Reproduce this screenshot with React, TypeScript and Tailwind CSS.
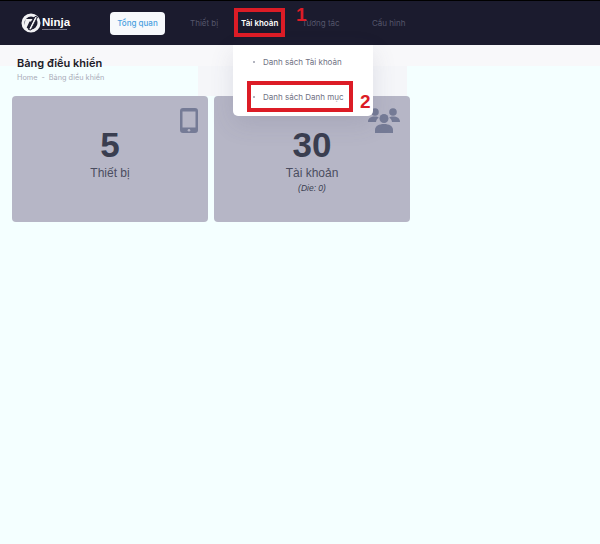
const NAV_ITEMS = [
  { label: "Thiết bị", cls: "w-[51px] text-[#55566b]" },
  { label: "Tài khoản", cls: "w-[61px] font-semibold text-white" },
  { label: "Tương tác", cls: "w-[70px] text-[#55566b]" },
  { label: "Cấu hình", cls: "w-[40px] text-[#55566b]" },
];

const MENU_ITEMS = ["Danh sách Tài khoản", "Danh sách Danh mục"];

function Logo() {
  return (
    <div className="flex items-center">
      <svg width="20" height="20" viewBox="0 0 20 20" className="shrink-0">
        <circle cx="10" cy="10" r="8" fill="none" stroke="#f1f1f4" strokeWidth="3" />
        <path d="M4.500 6h7l-1.500 2.500H8.500L5.500 15h-2.500z" fill="#f1f1f4" />
        <path d="M14 3.500l2.500.5-6.500 13-2.500-.5z" fill="#f1f1f4" stroke="#1b1b2e" strokeWidth="1" />
      </svg>
      <div className="ml-[1px] flex flex-col items-start">
        <span className="font-['Liberation_Sans',sans-serif] text-[11.500px] leading-[12px] font-bold text-white">
          Ninja
        </span>
        <span className="mt-[1px] h-[1px] w-[25px] bg-[#77778a]" />
      </div>
    </div>
  );
}

function PhoneIcon() {
  return (
    <svg width="18" height="25" viewBox="0 0 18 25" fill="#757b96">
      <path
        fillRule="evenodd"
        d="M3 0h12a3 3 0 0 1 3 3v19a3 3 0 0 1-3 3H3a3 3 0 0 1-3-3V3a3 3 0 0 1 3-3zM2.500 3.500v16h13v-16z"
      />
      <circle cx="9" cy="22.200" r="1.300" fill="#b6b6c6" />
    </svg>
  );
}

function UsersIcon() {
  return (
    <svg width="32" height="25" viewBox="0 0 32 25" fill="#757b96">
      <circle cx="7" cy="4" r="3.800" />
      <circle cx="25" cy="4" r="3.800" />
      <path d="M0 14c0-4 3-5.500 7-5.500 2 0 3 .5 3.800 1.200-1.700 1-2.600 2.500-2.800 4.300z" />
      <path d="M32 14c0-4-3-5.500-7-5.500-2 0-3 .5-3.800 1.200 1.700 1 2.600 2.500 2.800 4.300z" />
      <circle cx="16" cy="10.500" r="4.500" />
      <path d="M7 25v-3c0-4 4-6 9-6s9 2 9 6v3z" />
    </svg>
  );
}

function StatCard({
  value,
  label,
  note,
  icon,
}: {
  value: string;
  label: string;
  note?: string;
  icon: JSX.Element;
}) {
  return (
    <div className="relative flex h-[126px] w-[196px] flex-col items-center rounded-[4px] bg-[#b6b6c6] pt-[29px] font-['Liberation_Sans',sans-serif] text-[#3a3e50]">
      <div className="absolute top-[12px] right-[10px] flex justify-end">{icon}</div>
      <span className="text-[35px] leading-[40px] font-bold">{value}</span>
      <span className="mt-[1px] text-[12px] leading-[15px] text-[#4b4d60]">{label}</span>
      {note && <span className="mt-[1px] text-[8.500px] leading-[12px] italic">{note}</span>}
    </div>
  );
}

export default function App() {
  return (
    <div className="relative h-[544px] w-[600px] overflow-hidden bg-[#f4ffff] font-['Inter','Liberation_Sans',sans-serif]">
      <header className="flex h-[45px] items-center border-t border-black bg-[#1b1b2e] pl-[21px] text-[8px]">
        <div className="w-[89px]">
          <Logo />
        </div>
        <button
          type="button"
          className="h-[23px] w-[55px] rounded-[4px] bg-[#f7f9fc] text-[8px] font-medium text-[#4a9fe0]"
        >
          Tổng quan
        </button>
        <nav className="ml-[25px] flex items-center">
          {NAV_ITEMS.map((item) => (
            <span key={item.label} className={item.cls}>
              {item.label}
            </span>
          ))}
        </nav>
      </header>

      <div className="relative h-[51px] px-[17px] pt-[11px]">
        {/* dải nền nhạt sau tiêu đề và quầng mờ của menu */}
        <div className="absolute inset-x-0 top-0 h-[21px] bg-[#f8f8fa]" />
        <div className="absolute top-[21px] left-[198px] h-[30px] w-[209px] bg-[#f5f6f9]" />
        <div className="relative">
          <h1 className="text-[11px] leading-[14px] font-semibold text-[#1b1b28]">Bảng điều khiển</h1>
          <div className="mt-[3px] flex items-center gap-[4px] text-[7.300px] leading-[10px] text-[#a9abb8]">
            <span>Home</span>
            <span>-</span>
            <span>Bảng điều khiển</span>
          </div>
        </div>
      </div>

      <div className="flex gap-[6px] px-[12px]">
        <StatCard value="5" label="Thiết bị" icon={<PhoneIcon />} />
        <StatCard value="30" label="Tài khoản" note="(Die: 0)" icon={<UsersIcon />} />
      </div>

      {/* menu thả xuống và chú thích đỏ nằm đè lên nội dung */}
      <div className="absolute top-[45px] left-[233px] flex h-[71px] w-[140px] flex-col gap-[23px] rounded-b-[5px] bg-white pt-[11px] pl-[20px] text-[8px] leading-[12px] text-[#6f7183] shadow-[0_8px_24px_rgba(80,80,110,0.14)]">
        {MENU_ITEMS.map((label) => (
          <div key={label} className="relative">
            <span className="absolute top-[5px] left-[0px] h-[2px] w-[2px] rounded-full bg-[#9a9cab]" />
            <span className="ml-[10px]">{label}</span>
          </div>
        ))}
      </div>

      <div className="absolute top-[8px] left-[234px] h-[29px] w-[51px] border-[4px] border-[#dc1c26]" />
      <div className="absolute top-[81px] left-[247px] h-[31px] w-[106px] border-[4px] border-[#dc1c26]" />
      <span className="absolute top-[4px] left-[296px] font-['Liberation_Sans',sans-serif] text-[19px] leading-[22px] font-bold text-[#dc1c26]">
        1
      </span>
      <span className="absolute top-[91px] left-[360px] font-['Liberation_Sans',sans-serif] text-[19px] leading-[22px] font-bold text-[#dc1c26]">
        2
      </span>
    </div>
  );
}
